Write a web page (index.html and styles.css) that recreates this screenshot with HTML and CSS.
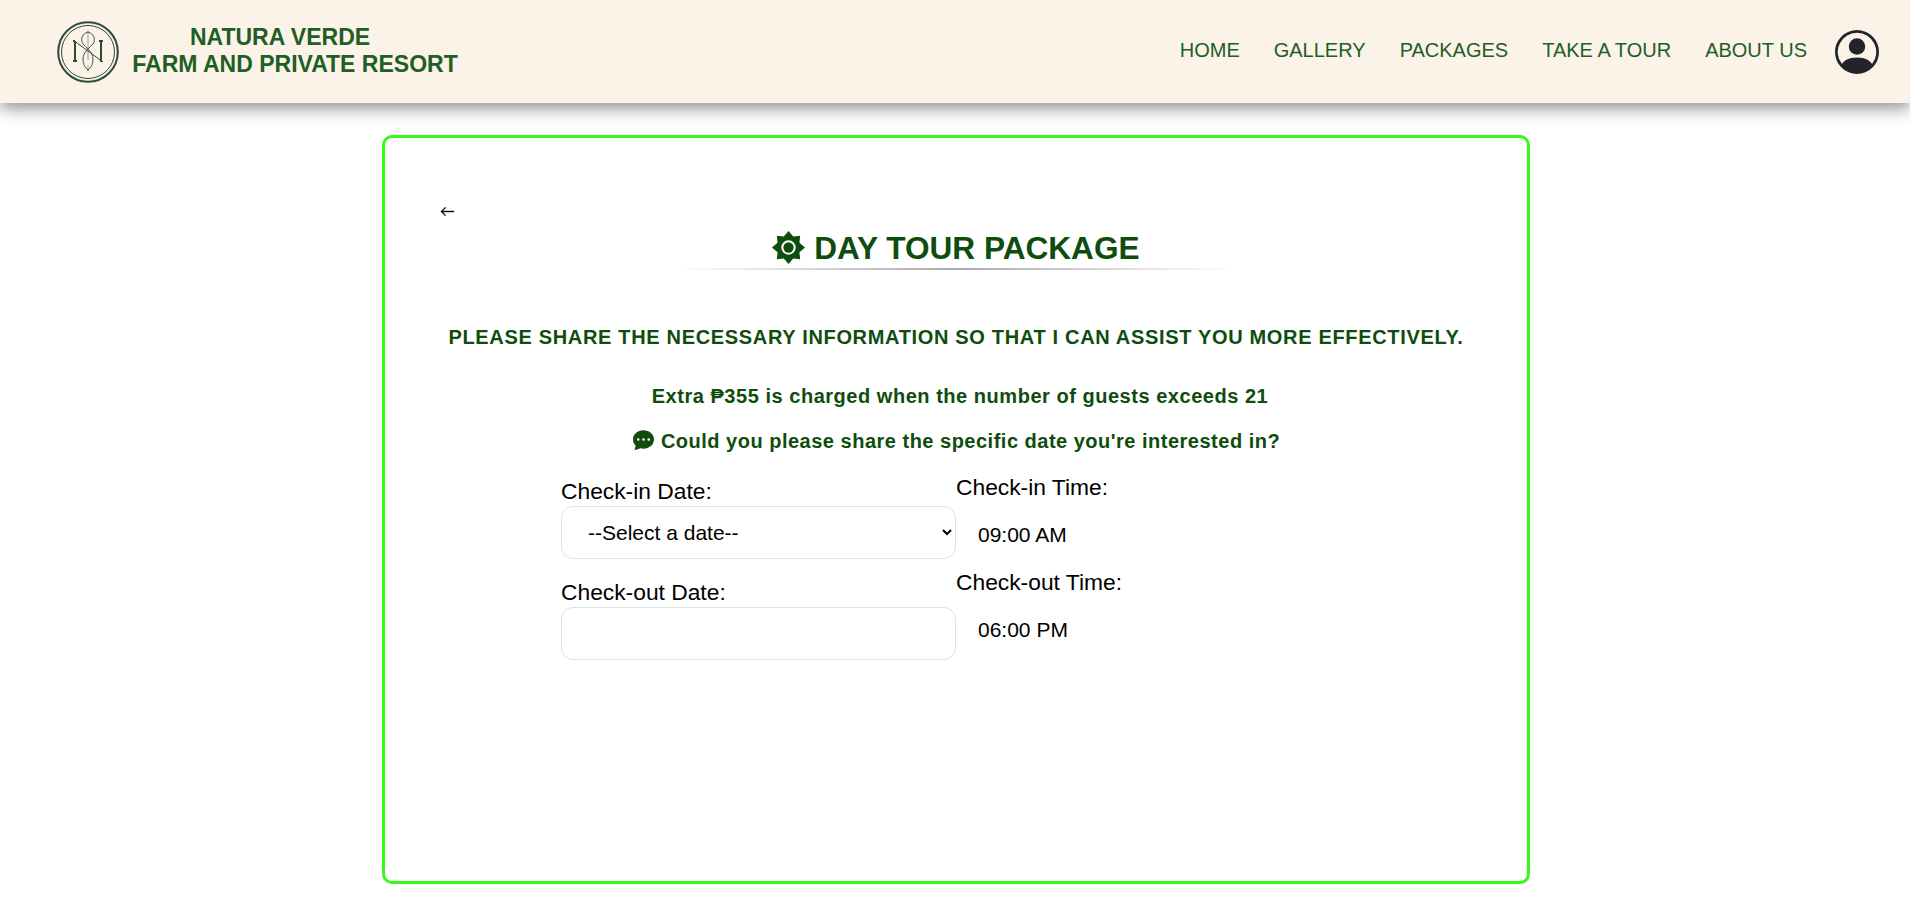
FILE: index.html
```html
<!DOCTYPE html>
<html lang="en">
<head>
<meta charset="utf-8">
<title>Natura Verde Farm and Private Resort</title>
<link rel="stylesheet" href="styles.css">
</head>
<body>
<header class="topbar">
  <a class="brand" href="#">
    <svg class="brand-logo" viewBox="0 0 62 62" fill="none" stroke="#2c4a38">
      <circle cx="31" cy="31" r="29.800" stroke-width="2"/>
      <circle cx="31" cy="31" r="26.500" stroke-width="1"/>
      <path d="M18 20v20M16 20h2M16 40h4" stroke-width="2"/>
      <path d="M44 21v20M42 20h4" stroke-width="2"/>
      <path d="M16 19L46 41" stroke-width="1"/>
      <path d="M31 11C24 13 23 20 27 24C31 28 36 32 36 38C36 43 34 47 31 49C28 47 26 43 26 38C26 32 31 28 35 24C39 20 38 13 31 11z" stroke-width=".9"/>
      <path d="M31 9v30M31 44v6" stroke-width=".5"/>
    </svg>
    <span class="brand-name"><span class="brand-top">NATURA VERDE</span>FARM AND PRIVATE RESORT</span>
  </a>
  <nav class="nav">
    <a href="#">HOME</a>
    <a href="#">GALLERY</a>
    <a href="#">PACKAGES</a>
    <a href="#">TAKE A TOUR</a>
    <a href="#">ABOUT US</a>
  </nav>
  <svg class="avatar" viewBox="0 0 16 16" fill="#212529">
    <path d="M11 6a3 3 0 1 1-6 0 3 3 0 0 1 6 0"/>
    <path fill-rule="evenodd" d="M0 8a8 8 0 1 1 16 0A8 8 0 0 1 0 8m8-7a7 7 0 0 0-5.468 11.37C3.242 11.226 4.805 10 8 10s4.757 1.225 5.468 2.37A7 7 0 0 0 8 1"/>
  </svg>
</header>

<main class="card">
  <a class="back" href="#">
    <svg viewBox="0 0 16 16" fill="#000" stroke="#000" stroke-width=".5"><path fill-rule="evenodd" d="M15 8a.5.5 0 0 0-.5-.5H2.707l3.147-3.146a.5.5 0 1 0-.708-.708l-4 4a.5.5 0 0 0 0 .708l4 4a.5.5 0 0 0 .708-.708L2.707 8.5H14.5A.5.5 0 0 0 15 8"/></svg>
  </a>
  <h1 class="title">
    <svg class="title-icon" viewBox="0 0 32 32">
      <path fill="#0e4d0e" d="M16 0L20.600 5.400 27.300 4.700 26.600 11.400 32 16 26.600 20.600 27.300 27.300 20.600 26.600 16 32 11.400 26.600 4.700 27.300 5.400 20.600 0 16 5.400 11.400 4.700 4.700 11.400 5.400z"/>
      <circle cx="16" cy="16" r="7" fill="#fff"/>
      <circle cx="16" cy="16" r="5" fill="#0e4d0e"/>
    </svg>
    DAY TOUR PACKAGE
  </h1>
  <div class="title-rule"></div>
  <h2 class="lead">PLEASE SHARE THE NECESSARY INFORMATION SO THAT I CAN ASSIST YOU MORE EFFECTIVELY.</h2>
  <p class="note note-extra">Extra ₱355 is charged when the number of guests exceeds 21</p>
  <p class="note note-ask">
    <svg class="chat-icon" viewBox="0 0 16 16" fill="#0e4d0e"><path d="M16 8c0 3.866-3.582 7-8 7a9 9 0 0 1-2.347-.306c-.584.296-1.925.864-4.181 1.234-.2.032-.352-.176-.273-.362.354-.836.674-1.95.77-2.966C.744 11.37 0 9.760 0 8c0-3.866 3.582-7 8-7s8 3.134 8 7M5 8a1 1 0 1 0-2 0 1 1 0 0 0 2 0m4 0a1 1 0 1 0-2 0 1 1 0 0 0 2 0m3 1a1 1 0 1 0 0-2 1 1 0 0 0 0 2"/></svg>
    Could you please share the specific date you're interested in?
  </p>

  <form class="dates">
    <div class="date-col">
      <label class="field-label">Check-in Date:</label>
      <select class="field"><option>--Select a date--</option></select>
      <label class="field-label field-label-next">Check-out Date:</label>
      <input class="field" type="text">
    </div>
    <div class="time-col">
      <div class="time-label">Check-in Time:</div>
      <div class="time-value">09:00 AM</div>
      <div class="time-label">Check-out Time:</div>
      <div class="time-value">06:00 PM</div>
    </div>
  </form>
</main>
</body>
</html>
```

FILE: styles.css
```css
* {
    box-sizing: border-box;
}
body {
    margin: 0;
    font-family: "Liberation Sans", Arial, sans-serif;
    background: #fff;
    color: #000;
}
a {
    text-decoration: none;
    color: inherit;
}

.topbar {
    display: flex;
    align-items: center;
    height: 103px;
    padding: 0 31px 0 57px;
    background: #fbf3e8;
    box-shadow: 0 5px 16px rgba(0, 0, 0, .45);
}
.brand {
    display: flex;
    align-items: center;
    gap: 13px;
    margin-right: auto;
}
.brand-logo {
    flex-shrink: 0;
    width: 62px;
    height: 62px;
}
.brand-name {
    flex-shrink: 0;
    width: 326px;
    margin-bottom: 2px;
    font-size: 23px;
    line-height: 27px;
    font-weight: bold;
    text-align: center;
    white-space: nowrap;
    color: #205e26;
}
.brand-top {
    display: block;
    padding-right: 30px;
}
.nav {
    display: flex;
    gap: 34px;
    margin-bottom: 2px;
    font-size: 20px;
    color: #205e26;
}
.avatar {
    width: 44px;
    height: 44px;
    margin-left: 28px;
}

.card {
    width: 1148px;
    height: 749px;
    margin: 32px 0 0 382px;
    padding: 66px 55px 0;
    border: 3px solid #36fa17;
    border-radius: 10px;
}
.back {
    display: block;
    width: 15px;
    height: 15px;
}
.back svg {
    display: block;
    width: 15px;
    height: 15px;
}
.title {
    margin: 10px 0 0;
    font-size: 31.600px;
    line-height: 38px;
    font-weight: bold;
    text-align: center;
    color: #0e4d0e;
}
.title-icon {
    width: 33px;
    height: 33px;
    vertical-align: -5px;
}
.title-rule {
    width: 560px;
    height: 2px;
    margin: 1px auto 0;
    background: linear-gradient(to right, rgba(170, 170, 170, 0), #aaa 50%, rgba(170, 170, 170, 0));
}
.lead {
    margin: 56px 0 0;
    font-size: 20px;
    line-height: 23px;
    font-weight: bold;
    letter-spacing: .67px;
    text-align: center;
    color: #0e4d0e;
}
.note {
    margin: 36px 0 0;
    font-size: 20px;
    line-height: 22px;
    font-weight: bold;
    letter-spacing: .5px;
    text-align: center;
    color: #0e4d0e;
}
.note-extra {
    padding-left: 8px;
    letter-spacing: .53px;
}
.note-ask {
    margin-top: 22px;
}
.chat-icon {
    width: 23px;
    height: 21px;
    vertical-align: -2px;
}

.dates {
    display: flex;
    margin: 19px 0 0 121px;
}
.date-col {
    width: 395px;
}
.field-label {
    display: block;
    font-size: 22.800px;
    line-height: 29px;
    padding-top: 6px;
}
.field-label-next {
    padding-top: 19px;
}
.field {
    display: block;
    width: 395px;
    height: 53px;
    padding: 0 0 0 22px;
    font-family: inherit;
    font-size: 21px;
    color: #000;
    background: #fff;
    border: 1px solid #dee2e6;
    border-radius: 12px;
}
.time-col {
    padding-top: 3px;
}
.time-label {
    font-size: 22.800px;
    line-height: 26px;
}
.time-value {
    height: 69px;
    padding: 23px 0 0 22px;
    font-size: 21px;
    line-height: 23px;
}
```
